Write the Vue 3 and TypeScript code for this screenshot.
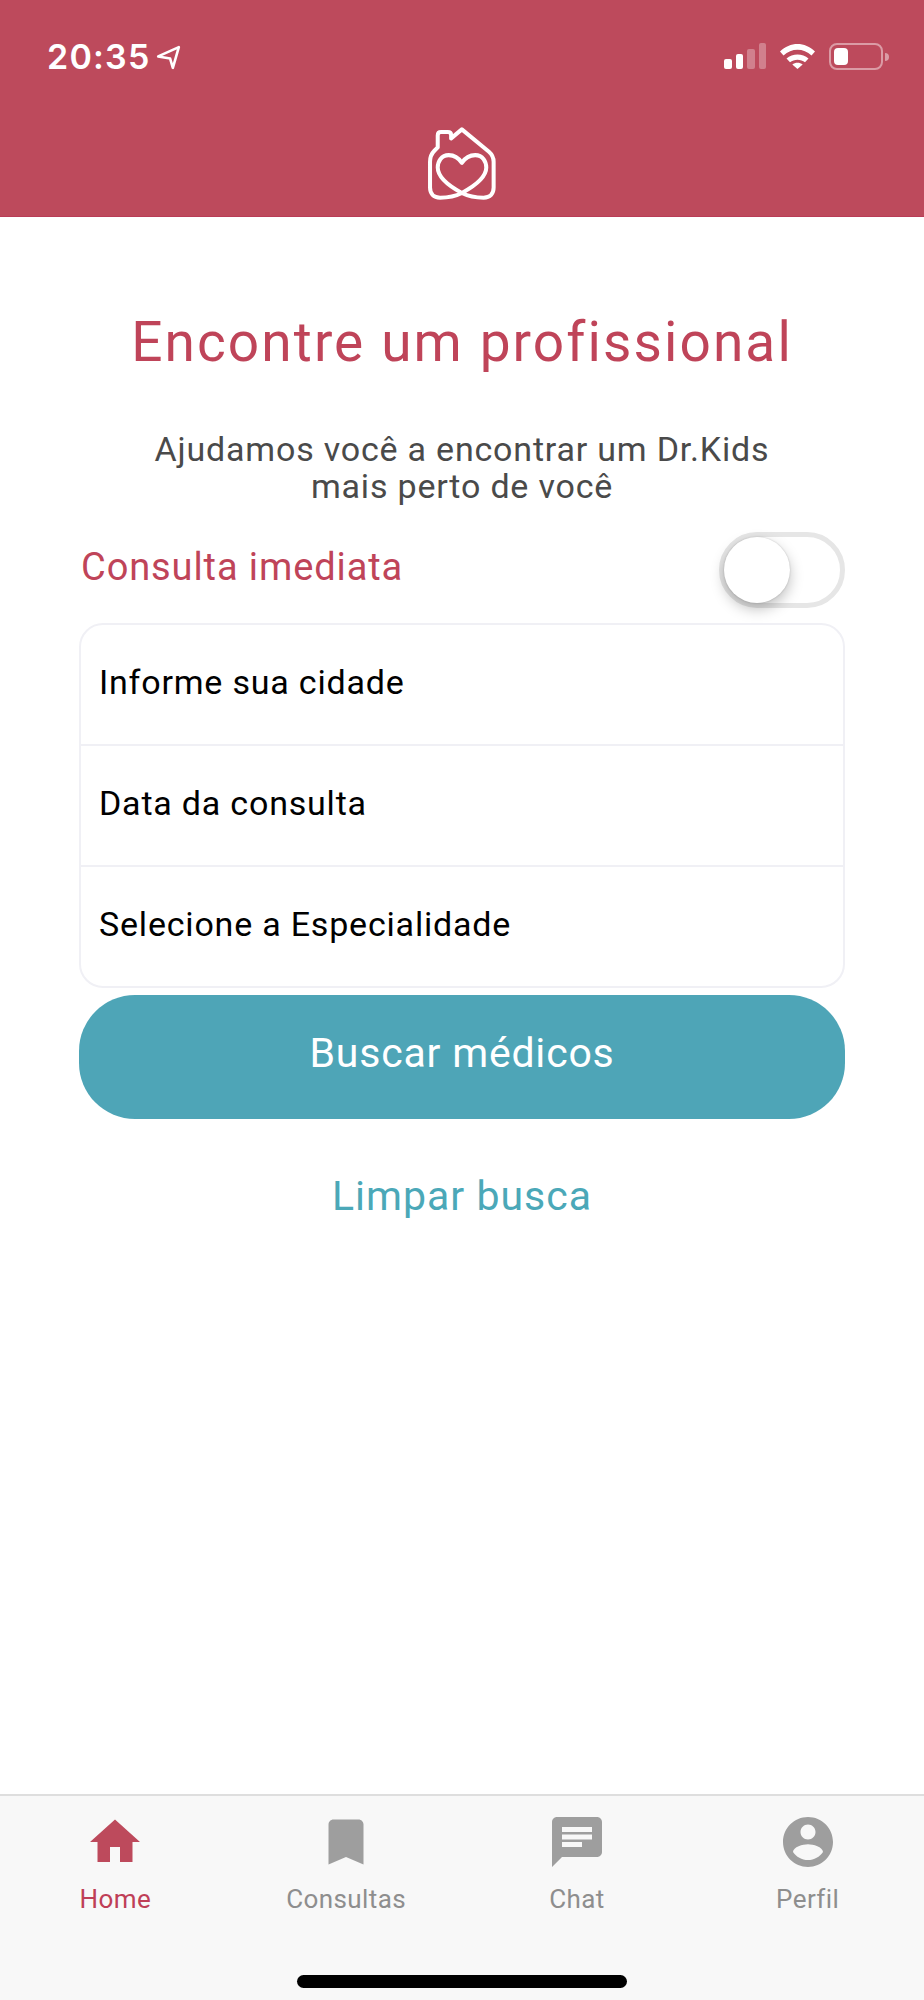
<template>
  <div class="screen">
    <header class="header">
      <div class="status">
        <div class="time">
          <span>20:35</span>
          <svg class="arrow" width="25" height="25" viewBox="0 0 23 23">
            <path d="M2 10.5 21 2l-5.500 19-2.500-8.500z" fill="none" stroke="#fff" stroke-width="2.400" stroke-linejoin="round" />
          </svg>
        </div>
        <div class="indicators">
          <div class="signal">
            <span class="bar b1"></span>
            <span class="bar b2"></span>
            <span class="bar b3"></span>
            <span class="bar b4"></span>
          </div>
          <svg class="wifi" width="37" height="26" viewBox="0 0 37 26">
            <path d="M1 8.500C11 -1.500 26 -1.500 36 8.500L32.500 12.500C24.500 4.800 12.500 4.800 4.500 12.500Z" fill="#fff" />
            <path d="M7.500 15.500C13.500 10 23.500 10 29.500 15.500L26 19.300C22 15.800 15 15.800 11 19.300Z" fill="#fff" />
            <path d="M13.300 21.500C16.300 19 20.700 19 23.700 21.500L18.500 26Z" fill="#fff" />
          </svg>
          <div class="battery">
            <div class="battery-body"><span class="battery-fill"></span></div>
            <span class="battery-cap"></span>
          </div>
        </div>
      </div>
      <svg class="logo" width="72" height="77" viewBox="80 45 215 230">
        <path
          d="M187 158C175 140 160 135 148 135C125 135 115 155 115 172C115 200 150 228 187 248C215 262 240 262 252 262C272 262 282 250 282 232L282 155C282 140 276 132 268 125L187 58L155 85L155 75Q155 66 145 66L125 66Q115 66 115 76L115 112L105 122Q92 135 92 155L92 232C92 250 102 262 122 262C135 262 160 262 187 248C224 228 260 200 260 172C260 155 250 135 227 135C215 135 199 140 187 158Z"
          fill="none"
          stroke="#fff"
          stroke-width="12"
          stroke-linejoin="round"
        />
      </svg>
    </header>

    <main class="content">
      <h1 class="title">Encontre um profissional</h1>
      <p class="subtitle">Ajudamos você a encontrar um Dr.Kids<br />mais perto de você</p>

      <div class="immediate">
        <span class="immediate-label">Consulta imediata</span>
        <div class="toggle"><span class="knob"></span></div>
      </div>

      <div class="fields">
        <div v-for="field in fields" :key="field" class="field">{{ field }}</div>
      </div>

      <button class="search" type="button">Buscar médicos</button>
      <div class="clear">Limpar busca</div>
    </main>

    <footer class="tabbar">
      <nav class="tabs">
        <div v-for="tab in tabs" :key="tab.label" class="tab" :class="{ active: tab.active }">
          <svg class="tab-icon" width="60" height="60" viewBox="0 0 24 24">
            <path :d="tab.icon" fill="currentColor" />
          </svg>
          <span class="tab-label">{{ tab.label }}</span>
        </div>
      </nav>
      <div class="home-bar"></div>
    </footer>
  </div>
</template>

<script setup lang="ts">
interface Tab {
  label: string;
  icon: string;
  active?: boolean;
}

const fields: string[] = ['Informe sua cidade', 'Data da consulta', 'Selecione a Especialidade'];

const tabs: Tab[] = [
  { label: 'Home', icon: 'M10 20v-6h4v6h5v-8h3L12 3 2 12h3v8z', active: true },
  { label: 'Consultas', icon: 'M17 3H7c-1.1 0-1.99.9-1.99 2L5 21l7-3 7 3V5c0-1.1-.9-2-2-2z' },
  {
    label: 'Chat',
    icon: 'M20 2H4c-1.1 0-1.99.9-1.99 2L2 22l4-4h14c1.1 0 2-.9 2-2V4c0-1.1-.9-2-2-2zM6 9h12v2H6V9zm8 5H6v-2h8v2zm4-6H6V6h12v2z'
  },
  {
    label: 'Perfil',
    icon: 'M12 2C6.48 2 2 6.48 2 12s4.48 10 10 10 10-4.48 10-10S17.52 2 12 2zm0 3c1.66 0 3 1.34 3 3s-1.34 3-3 3-3-1.34-3-3 1.34-3 3-3zm0 14.2c-2.5 0-4.71-1.28-6-3.22.03-1.99 4-3.08 6-3.08 1.99 0 5.97 1.09 6 3.08-1.29 1.94-3.5 3.22-6 3.22z'
  }
];
</script>

<style>
html,
body {
  background: #fff;
}
</style>

<style scoped>
.screen {
  width: 924px;
  height: 2000px;
  display: flex;
  flex-direction: column;
  background: #fff;
  font-family: Roboto, "Liberation Sans", sans-serif;
  overflow: hidden;
}

.header {
  height: 217px;
  box-sizing: border-box;
  background: #bd4a5c;
  border-bottom: 1px solid #b93c57;
  display: flex;
  flex-direction: column;
  align-items: center;
}

.status {
  width: 100%;
  height: 125px;
  box-sizing: border-box;
  padding: 43px 35px 0 47px;
  display: flex;
  justify-content: space-between;
  align-items: flex-start;
}

.time {
  display: flex;
  align-items: center;
  gap: 6px;
  height: 27px;
  color: #fff;
  font-family: Inter, sans-serif;
  font-size: 34px;
  font-weight: 600;
  letter-spacing: 1.2px;
}

.arrow {
  margin-top: 1px;
}

.indicators {
  display: flex;
  align-items: flex-start;
}

.signal {
  display: flex;
  align-items: flex-end;
  gap: 4px;
  height: 26px;
  margin-right: 13px;
}

.bar {
  width: 7.500px;
  border-radius: 2px;
  background: #fff;
}

.b1 {
  height: 10px;
}

.b2 {
  height: 15px;
}

.b3 {
  height: 20px;
  background: rgba(255, 255, 255, 0.3);
}

.b4 {
  height: 26px;
  background: rgba(255, 255, 255, 0.3);
}

.wifi {
  margin-right: 13px;
}

.battery {
  display: flex;
  align-items: center;
  height: 27px;
  gap: 2px;
}

.battery-body {
  width: 54px;
  height: 27px;
  box-sizing: border-box;
  padding: 3px;
  border: 2px solid rgba(255, 255, 255, 0.45);
  border-radius: 8px;
}

.battery-fill {
  display: block;
  width: 14px;
  height: 100%;
  border-radius: 4px;
  background: #fff;
}

.battery-cap {
  width: 4px;
  height: 8px;
  border-radius: 0 4px 4px 0;
  background: rgba(255, 255, 255, 0.45);
}

.content {
  flex: 1;
  padding: 0 79px;
  display: flex;
  flex-direction: column;
}

.title {
  margin: 92px 0 0;
  text-align: center;
  color: #bf4459;
  font-size: 55px;
  line-height: 66px;
  font-weight: 400;
  letter-spacing: 2.1px;
}

.subtitle {
  margin: 56px 0 0;
  text-align: center;
  color: #4a4a4a;
  font-size: 34px;
  line-height: 37px;
  letter-spacing: 0.8px;
}

.immediate {
  margin-top: 27px;
  height: 76px;
  display: flex;
  align-items: center;
  justify-content: space-between;
  padding-left: 2px;
}

.immediate-label {
  color: #bf4459;
  font-size: 38px;
  letter-spacing: 0.9px;
  margin-top: -6px;
}

.toggle {
  width: 126px;
  height: 76px;
  box-sizing: border-box;
  border: 5px solid #e6e6e6;
  border-radius: 38px;
  background: #fff;
  display: flex;
  align-items: center;
}

.knob {
  width: 66px;
  height: 66px;
  border-radius: 50%;
  background: #fff;
  box-shadow: 0 6px 14px rgba(0, 0, 0, 0.25), 0 0 2px rgba(0, 0, 0, 0.2);
}

.fields {
  margin-top: 15px;
  border: 2px solid #f0f0f5;
  border-radius: 24px;
  background: #fff;
}

.field {
  height: 119px;
  box-sizing: border-box;
  padding: 0 0 5px 18px;
  display: flex;
  align-items: center;
  color: #000;
  font-size: 34px;
  letter-spacing: 0.8px;
}

.field + .field {
  height: 121px;
  border-top: 2px solid #f0f0f5;
}

.search {
  margin-top: 7px;
  height: 124px;
  border: none;
  border-radius: 56px;
  padding-bottom: 10px;
  background: #4ea5b7;
  color: #fff;
  font-family: inherit;
  font-size: 41px;
  letter-spacing: 0.8px;
}

.clear {
  margin-top: 50px;
  text-align: center;
  color: #4ba8b8;
  font-size: 41px;
  line-height: 54px;
  letter-spacing: 1px;
}

.tabbar {
  height: 206px;
  box-sizing: border-box;
  background: #f8f8f8;
  border-top: 2px solid #dedede;
  display: flex;
  flex-direction: column;
  align-items: center;
}

.tabs {
  width: 100%;
  box-sizing: border-box;
  padding: 16px 1px 0 0;
  display: grid;
  grid-template-columns: repeat(4, 1fr);
}

.tab {
  display: flex;
  flex-direction: column;
  align-items: center;
  color: #9e9e9e;
}

.tab.active {
  color: #bd4a5c;
}

.tab-label {
  margin-top: 11px;
  font-size: 26px;
  line-height: 32px;
  color: #8e8e8e;
  letter-spacing: 0.4px;
}

.tab.active .tab-label {
  color: #bf3f57;
}

.home-bar {
  width: 330px;
  height: 13px;
  margin-top: 60px;
  border-radius: 7px;
  background: #000;
}
</style>
